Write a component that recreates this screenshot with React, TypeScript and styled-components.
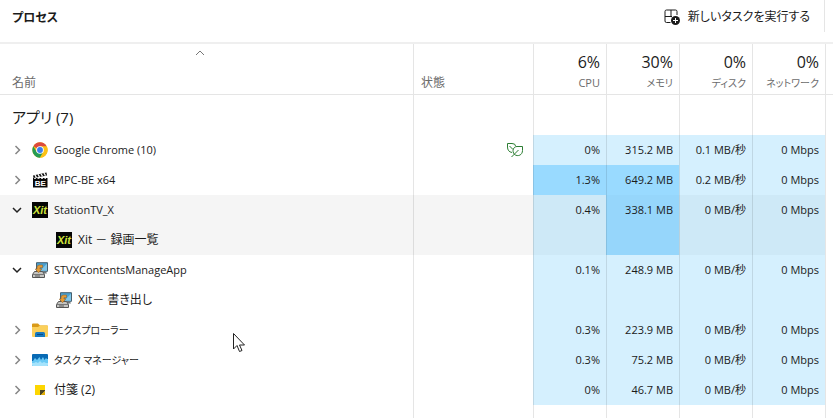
import React, { useState } from "react";
import styled, { createGlobalStyle, css } from "styled-components";

const GlobalStyle = createGlobalStyle`
  *, *::before, *::after { box-sizing: border-box; }
  body {
    margin: 0;
    background: #fff;
    color: #1b1b1b;
    font-family: "Open Sans", "Noto Sans CJK JP", sans-serif;
    font-size: 12px;
    line-height: 18px;
    font-feature-settings: "palt";
  }
  button { font: inherit; font-feature-settings: inherit; color: inherit; background: none; border: 0; padding: 0; margin: 0; }
`;

const line = "rgba(0, 0, 0, 0.1)";

type TextKind = "latin" | "kanji" | "kana";

const textSize: Record<TextKind, number> = { latin: 11, kanji: 12, kana: 10 };

const Page = styled.main`
  position: relative;
  display: flex;
  flex-direction: column;
  min-height: 100vh;
`;

const Toolbar = styled.header`
  display: flex;
  justify-content: space-between;
  align-items: flex-start;
  height: 44px;
  border-bottom: 2px solid #efefef;
  padding: 0 8px 0 12px;
`;

const Title = styled.h1`
  margin: 0;
  padding-top: 8px;
  font-size: 12px;
  line-height: 20px;
  font-weight: 600;
`;

const NewTask = styled.button`
  display: flex;
  align-items: center;
  gap: 8px;
  height: 32px;
  padding: 2px 14px 0 0;
  border-right: 1px solid #e5e5e5;
  font-size: 12px;
  white-space: nowrap;
`;

const Table = styled.table`
  width: 100%;
  table-layout: fixed;
  border-collapse: separate;
  border-spacing: 0;
`;

const NameCol = styled.col``;
const StatusCol = styled.col`width: 120px;`;
const ValueCol = styled.col`width: 73px;`;
const EdgeCol = styled.col`width: 8px;`;

const HeadCell = styled.th<{ $align?: "left" | "right" }>`
  height: 51px;
  padding: 0 6px 2px 7px;
  vertical-align: bottom;
  text-align: ${(p) => p.$align ?? "left"};
  font-weight: 400;
  color: #6b6b6b;
  border-bottom: 1px solid #e5e5e5;
  white-space: nowrap;
  & + & { border-left: 1px solid ${line}; }
  &:first-child { padding-left: 12px; }
`;

const SortButton = styled.button`
  display: flex;
  flex-direction: column;
  width: 100%;
  gap: 18px;
  text-align: left;
`;

const SortMark = styled.svg`
  align-self: center;
  margin-right: 20px;
`;

const Total = styled.span`
  display: block;
  font-size: 16px;
  line-height: 24px;
  color: #1b1b1b;
`;

const Measure = styled.span<{ $kind: TextKind }>`
  display: block;
  font-size: ${(p) => textSize[p.$kind]}px;
  line-height: 18px;
`;

const Cell = styled.td`
  padding: 0;
  & + & { border-left: 1px solid ${line}; }
`;

const EdgeCell = styled.td`
  padding: 0;
  background: #fff;
  border-left: 1px solid ${line};
`;

const GroupCell = styled.th`
  height: 40px;
  padding: 4px 12px 0;
  text-align: left;
  font-weight: 400;
  font-size: 15px;
  line-height: 24px;
  & + td { border-left: 1px solid ${line}; }
`;

const Row = styled.tr<{ $active?: boolean }>`
  height: 30px;
  ${(p) => p.$active && css`background: #f5f5f5;`}
`;

const NameCell = styled.th`
  padding: 0;
  text-align: left;
  font-weight: 400;
  & + td { border-left: 1px solid ${line}; }
`;

const NameLine = styled.div<{ $child?: boolean }>`
  display: flex;
  align-items: center;
  height: 30px;
  gap: 6px;
  padding-left: ${(p) => (p.$child ? 56 : 12)}px;
  white-space: nowrap;
`;

const Toggle = styled.button`
  display: grid;
  place-items: center start;
  width: 14px;
  height: 20px;
`;

const Icon = styled.svg`
  width: 16px;
  height: 16px;
  flex: none;
`;

const Label = styled.span<{ $kind: TextKind }>`
  font-size: ${(p) => textSize[p.$kind]}px;
`;

const StatusBox = styled.div`
  display: flex;
  justify-content: flex-end;
  padding-right: 10px;
`;

const fills = {
  light: ["#d5f0fe", "#cee9f7"],
  strong: ["#99daff", "#96d6fb"],
};

const ValueCell = styled(Cell)<{ $level: "light" | "strong"; $active?: boolean }>`
  padding-right: 6px;
  font-size: ${textSize.latin}px;
  text-align: right;
  white-space: nowrap;
  background: ${(p) => fills[p.$level][p.$active ? 1 : 0]};
`;

const Filler = styled.div`
  flex: 1;
  display: grid;
  grid-template-columns: 1fr 120px repeat(4, 73px) 8px;
  & > span + span { border-left: 1px solid ${line}; }
`;

const Pointer = styled.svg`
  position: absolute;
  left: 233px;
  top: 333px;
  pointer-events: none;
`;

const ChromeIcon = () => (
  <Icon viewBox="0 0 48 48" aria-hidden="true">
    <circle cx="24" cy="24" r="23" fill="#fbc116" />
    <path d="M24 24 4.1 12.5A23 23 0 0 1 43.9 12.5H24Z" fill="#dd4a3e" />
    <path d="M4.1 12.5A23 23 0 0 0 24 47l10-17.300L24 24 14 29.700Z" fill="#249b54" />
    <path d="M43.900 12.500A23 23 0 0 1 24 47l10-17.300L36 18Z" fill="#fbc116" />
    <circle cx="24" cy="24" r="11.500" fill="#fff" />
    <circle cx="24" cy="24" r="8.800" fill="#3b7ded" />
  </Icon>
);

const MpcIcon = () => (
  <Icon viewBox="0 0 16 16" aria-hidden="true">
    <path d="M1 3.500 14.500.5l.5 3L1.500 6Z" fill="#111" />
    <path d="m3 3 1.500 2.600M6 2.300l1.500 2.600M9 1.700l1.500 2.600M12 1l1.500 2.600" stroke="#fff" strokeWidth="1.300" />
    <path d="M1 6h14.500v9.500H1Z" fill="#080808" />
    <path d="M2 6.500h12" stroke="#fff" strokeDasharray="2 1.500" strokeWidth=".8" />
    <text x="8.200" y="14" textAnchor="middle" fontFamily="Liberation Sans" fontWeight="700" fontSize="8" fill="#fff">BE</text>
  </Icon>
);

const XitIcon = () => (
  <Icon viewBox="0 0 16 16" aria-hidden="true">
    <rect width="16" height="16" fill="#050505" />
    <text x="8" y="12" textAnchor="middle" fontFamily="Liberation Sans" fontWeight="700" fontStyle="italic" fontSize="11" fill="#cfe43c">Xit</text>
  </Icon>
);

const ExportIcon = () => (
  <Icon viewBox="0 0 16 16" aria-hidden="true">
    <path d="M4.500.7h11v8.600h-11Z" fill="#4ba0cf" stroke="#47606f" />
    <path d="m8 8.800 7-7v7Z" fill="#81c6e8" />
    <path d="M11 9.500h3l1 2h-5Z" fill="#6e777b" />
    <path d="M2.500 9.500.5 12.500v3h12v-3l-2-3Z" fill="#c4c4c1" stroke="#555" />
    <path d="M1 12.500h11" stroke="#777" />
    <path d="M3 14h5" stroke="#555" />
    <path d="M10.500 3H7.500Q5 3 5 5.500V7H3.200l3.300 3.700L9.800 7H8V5.700h2.500Z" fill="#e49b36" stroke="#8a5f26" strokeWidth=".5" />
  </Icon>
);

const FolderIcon = () => (
  <Icon viewBox="0 0 16 16" aria-hidden="true">
    <path d="M0 2.500Q0 1.500 1 1.500h5L8 3.500h7q1 0 1 1V8H0Z" fill="#d99a18" />
    <path d="M0 5h6l2-1.500h7q1 0 1 1V14q0 1-1 1H1q-1 0-1-1Z" fill="#fbd05a" />
    <path d="M3 15v-3.500q0-1.500 1.500-1.500h7q1.500 0 1.500 1.500V15Z" fill="#1679c0" />
    <path d="M5 12.500h6" stroke="#0a4c82" />
  </Icon>
);

const MonitorIcon = () => (
  <Icon viewBox="0 0 16 16" aria-hidden="true">
    <rect y="2" width="16" height="12" rx="1" fill="#086ab4" />
    <path d="M0 9h1l2-3 2 2 2.500-3L9 8l2-3 1.500 3L14 6l1 1h1v6q0 1-1 1H1q-1 0-1-1Z" fill="#69c9f5" />
    <path d="M0 11h2l2-1 2 1 2-2 2 2 2-1 2 1h2v2q0 1-1 1H1q-1 0-1-1Z" fill="#a5e3fc" />
  </Icon>
);

const NoteIcon = () => (
  <Icon viewBox="0 0 16 16" aria-hidden="true">
    <path d="M3 3h10v6l-4 4H3Z" fill="#fdd600" />
    <path d="M8 13V8h5v1l-4 4Z" fill="#4c4420" />
    <path d="m9 13 4-4v4Z" fill="#e4ad00" />
  </Icon>
);

const LeafIcon = () => (
  <Icon viewBox="0 0 16 16" role="img" aria-label="効率モード" fill="none" stroke="#2b7d32">
    <path d="M5 10.500C2 10 .5 8 .5 5V1.500H5Q8.500 1.500 8.500 4M2.500 4l3.500 3.500" />
    <path d="M7.500 12.500C4.500 9 6.500 4.500 10 4.500h5.500V8.500c0 4.500-4.500 6.500-8 4ZM4.500 15l2-2L11.500 8" />
  </Icon>
);

const TaskIcon = () => (
  <Icon viewBox="0 0 16 16" aria-hidden="true">
    <path d="M6.500 13.500h-4q-1.500 0-1.500-1.500V2.500Q1 1 2.500 1h9Q13 1 13 2.500V6M7 1v6.500H1M7 7.500h1" fill="none" stroke="#1b1b1b" />
    <circle cx="11.500" cy="11.500" r="4.500" fill="#1b1b1b" />
    <path d="M9 11.500h5M11.500 9v5" stroke="#fff" />
  </Icon>
);

const Chevron = ({ open }: { open: boolean }) =>
  open ? (
    <svg width="10" height="10" viewBox="0 0 10 10" fill="none" stroke="#222" strokeWidth="1.500" aria-hidden="true">
      <path d="m1 3 4 4 4-4" />
    </svg>
  ) : (
    <svg width="10" height="10" viewBox="0 0 10 10" fill="none" stroke="#858585" strokeWidth="1.500" aria-hidden="true">
      <path d="m3.500 1 4 4-4 4" />
    </svg>
  );

interface Process {
  name: string;
  kind: TextKind;
  icon: React.FC;
  child?: string;
  eco?: boolean;
  active?: boolean;
  values: string[];
  strong?: number[];
}

const processes: Process[] = [
  { name: "Google Chrome (10)", kind: "latin", icon: ChromeIcon, eco: true, values: ["0%", "315.2 MB", "0.1 MB/秒", "0 Mbps"] },
  { name: "MPC-BE x64", kind: "latin", icon: MpcIcon, values: ["1.3%", "649.2 MB", "0.2 MB/秒", "0 Mbps"], strong: [0, 1] },
  { name: "StationTV_X", kind: "latin", icon: XitIcon, child: "Xit － 録画一覧", active: true, values: ["0.4%", "338.1 MB", "0 MB/秒", "0 Mbps"], strong: [1] },
  { name: "STVXContentsManageApp", kind: "latin", icon: ExportIcon, child: "Xit－ 書き出し", values: ["0.1%", "248.9 MB", "0 MB/秒", "0 Mbps"] },
  { name: "エクスプローラー", kind: "kana", icon: FolderIcon, values: ["0.3%", "223.9 MB", "0 MB/秒", "0 Mbps"] },
  { name: "タスク マネージャー", kind: "kana", icon: MonitorIcon, values: ["0.3%", "75.2 MB", "0 MB/秒", "0 Mbps"] },
  { name: "付箋 (2)", kind: "kanji", icon: NoteIcon, values: ["0%", "46.7 MB", "0 MB/秒", "0 Mbps"] },
];

const totals: { total: string; name: string; kind: TextKind }[] = [
  { total: "6%", name: "CPU", kind: "latin" },
  { total: "30%", name: "メモリ", kind: "kana" },
  { total: "0%", name: "ディスク", kind: "kana" },
  { total: "0%", name: "ネットワーク", kind: "kana" },
];

const ProcessRows = ({ process }: { process: Process }) => {
  const [open, setOpen] = useState(Boolean(process.child));
  const { icon: ProcessIcon, active, strong = [] } = process;
  const cells = (show: boolean) =>
    process.values.map((value, i) => (
      <ValueCell key={i} $active={active} $level={strong.includes(i) ? "strong" : "light"}>
        {show ? value : null}
      </ValueCell>
    ));
  return (
    <>
      <Row $active={active}>
        <NameCell scope="row">
          <NameLine>
            <Toggle aria-expanded={open} aria-label={process.name} onClick={() => setOpen(!open)}>
              <Chevron open={open} />
            </Toggle>
            <ProcessIcon />
            <Label $kind={process.kind}>{process.name}</Label>
          </NameLine>
        </NameCell>
        <Cell>{process.eco && <StatusBox><LeafIcon /></StatusBox>}</Cell>
        {cells(true)}
        <EdgeCell />
      </Row>
      {open && process.child && (
        <Row $active={active}>
          <NameCell scope="row">
            <NameLine $child>
              <ProcessIcon />
              <Label $kind="kanji">{process.child}</Label>
            </NameLine>
          </NameCell>
          <Cell />
          {cells(false)}
          <EdgeCell />
        </Row>
      )}
    </>
  );
};

export default function App() {
  return (
    <>
      <GlobalStyle />
      <Page>
        <Toolbar>
          <Title>プロセス</Title>
          <NewTask>
            <TaskIcon />
            新しいタスクを実行する
          </NewTask>
        </Toolbar>
        <Table>
          <colgroup>
            <NameCol />
            <StatusCol />
            {totals.map(({ name }) => <ValueCol key={name} />)}
            <EdgeCol />
          </colgroup>
          <thead>
            <tr>
              <HeadCell scope="col" aria-sort="ascending">
                <SortButton>
                  <SortMark width="10" height="6" viewBox="0 0 10 6" fill="none" stroke="#777" aria-hidden="true">
                    <path d="m1 5 4-4 4 4" />
                  </SortMark>
                  名前
                </SortButton>
              </HeadCell>
              <HeadCell scope="col">状態</HeadCell>
              {totals.map(({ total, name, kind }) => (
                <HeadCell key={name} scope="col" $align="right">
                  <Total>{total}</Total>
                  <Measure $kind={kind}>{name}</Measure>
                </HeadCell>
              ))}
              <HeadCell as="td" />
            </tr>
          </thead>
          <tbody>
            <tr>
              <GroupCell scope="rowgroup">アプリ (7)</GroupCell>
              <Cell />
              {totals.map(({ name }) => <Cell key={name} />)}
              <Cell />
            </tr>
            {processes.map((process) => <ProcessRows key={process.name} process={process} />)}
          </tbody>
        </Table>
        <Filler aria-hidden="true">
          <span /><span /><span /><span /><span /><span /><span />
        </Filler>
        <Pointer width="12" height="20" viewBox="0 0 12 20" aria-hidden="true">
          <path d="M.5.5v15.500l3.500-3.500 2.500 6 2.500-1-2.500-5.500h5Z" fill="#fff" stroke="#222" />
        </Pointer>
      </Page>
    </>
  );
}
